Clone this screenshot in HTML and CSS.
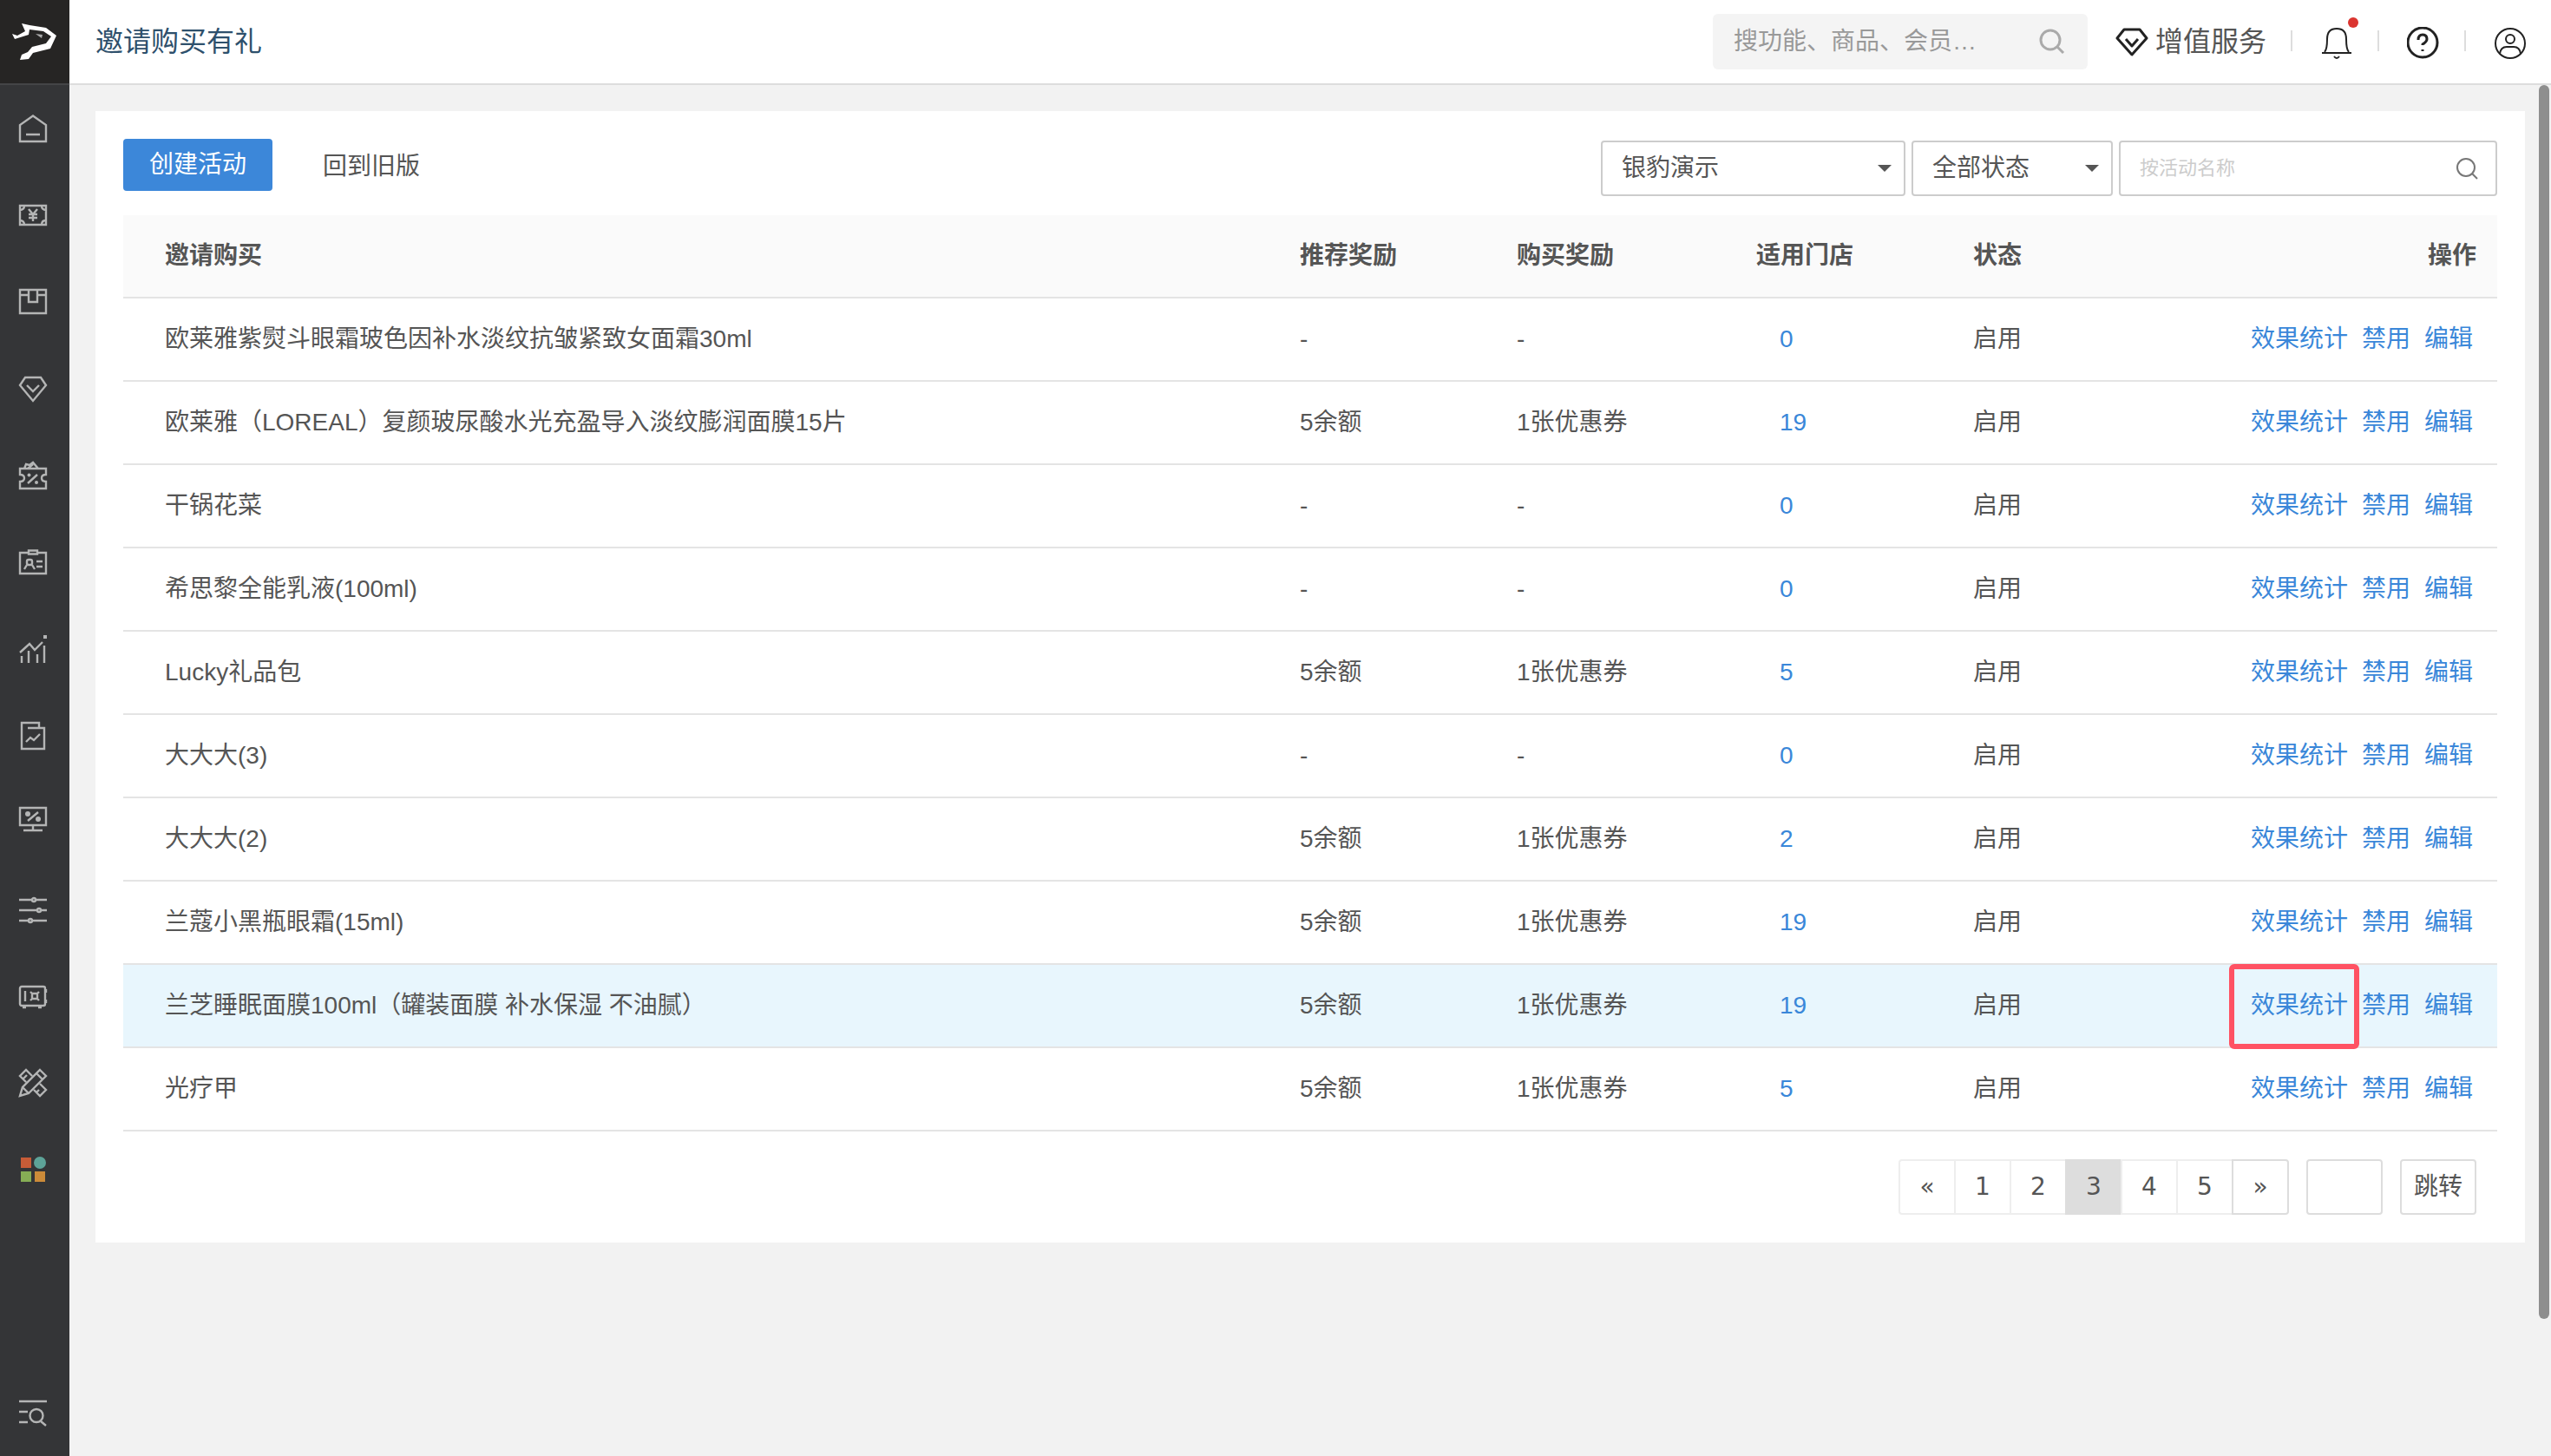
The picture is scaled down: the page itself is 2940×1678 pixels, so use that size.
FILE: index.html
```html
<!DOCTYPE html>
<html lang="zh-CN">
<head>
    <meta charset="UTF-8">
    <meta name="viewport" content="width=device-width, initial-scale=1.0">
    <title>邀请购买有礼</title>
    <link rel="stylesheet" href="styles.css">
</head>
<body>
    <!-- Sidebar -->
    <aside class="sidebar">
        <a class="logo" href="#" aria-label="首页">
            <svg width="52" height="44" viewBox="0 0 52 44"><path fill="#fff" d="M12 1 L21 3 L40 6 L52 15 L45 30 L25 35 L20 42 L10 43 L12 37 L19 34 L24 28 L40 24 L46 16 L37 10 L21 8 L20 14 L4 19 L1 13 L7 15 L16 10 Z"/><path fill="#aaa" d="M28 13 L36 14 L35 18 Z"/></svg>
        </a>
        <nav class="side-nav">
            <a href="#" aria-label="主页"><svg class="icon" viewBox="0 0 32 32"><path d="M1 31V12L16 1.500L31 12V31ZM8 23H24"/></svg></a>
            <a href="#" aria-label="收银"><svg class="icon" viewBox="0 0 32 32"><path d="M1 5H31V27H1ZM1 10Q6 10 6 5M26 5Q26 10 31 10M1 22Q6 22 6 27M26 27Q26 22 31 22M11 9L16 15L21 9M16 15V23M11 15H21M11 19H21"/></svg></a>
            <a href="#" aria-label="商品"><svg class="icon" viewBox="0 0 32 32"><path d="M1 2H31V29H1ZM1 8H11M21 8H31M11 2V16H21V2"/></svg></a>
            <a href="#" aria-label="会员"><svg class="icon" viewBox="0 0 32 32"><path d="M7 3H25L31 12L16 30L1 12ZM9 12L16 19L23 12"/></svg></a>
            <a href="#" aria-label="营销"><svg class="icon" viewBox="0 0 32 32"><path d="M1 8H31V15Q26 15 26 19Q26 23 31 23V31H1V23Q6 23 6 19Q6 15 1 15ZM6 8L8 3L12 4L16 1L22 8M10 8L16 3M10 25L21 15"/><circle class="solid" cx="11.500" cy="15.500" r="2"/><circle class="solid" cx="20" cy="24" r="2"/></svg></a>
            <a href="#" aria-label="员工"><svg class="icon" viewBox="0 0 32 32"><path d="M11 5H1V29H31V5H21M11 2.500H21V6.500H11ZM20 15H27M20 21H27M6 24L9 19M18 24L15 19"/><rect x="9" y="13" width="6" height="6" rx="2"/></svg></a>
            <a href="#" aria-label="数据"><svg class="icon" viewBox="0 0 32 32"><path d="M1 20L12 10L18 17L27 8M3 24V32M11 18V32M21 22V32M29 12V32"/><rect class="solid" x="28" y="0" width="4" height="4"/></svg></a>
            <a href="#" aria-label="报表"><svg class="icon" viewBox="0 0 32 32"><path d="M10 7H29V31H3V1H23V7M8 23L13 18L17 21L24 14"/></svg></a>
            <a href="#" aria-label="网店"><svg class="icon" viewBox="0 0 32 32"><path d="M1 -1H31V19H1ZM16 19V25M5 25H27M10 14L22 4"/><circle class="solid" cx="10" cy="6" r="3"/><circle class="solid" cx="22" cy="12" r="3"/></svg></a>
            <a href="#" aria-label="设置"><svg class="icon" viewBox="0 0 32 32"><path d="M0 5H15M19 5H32M0 17H21M25 17H32M0 29H11M15 29H32"/><circle cx="17" cy="5" r="2"/><circle cx="23" cy="17" r="2"/><circle cx="13" cy="29" r="2"/></svg></a>
            <a href="#" aria-label="资金"><svg class="icon" viewBox="0 0 32 32"><rect x="1" y="5" width="29" height="22" rx="2"/><path d="M7 10V22M15 13H21V19H15ZM13 11L15 13M23 11L21 13M13 21L15 19M23 21L21 19M4 29H8M22 29H26M31 8V12M31 20V24"/></svg></a>
            <a href="#" aria-label="工具"><svg class="icon" viewBox="0 0 32 32"><path d="M24 1L31 8L11 28L1 31L4 21ZM20 5L27 12M4 21L11 28M8 15L1 8L8 1L15 8M5 11L9 7M24 17L31 24L24 31L17 24M20 27L23 24"/></svg></a>
            <a href="#" aria-label="应用"><svg class="icon" viewBox="0 0 32 32"><rect class="app-red" x="2" y="2" width="12" height="12"/><circle class="app-teal" cx="24" cy="8" r="7"/><rect class="app-green" x="2" y="18" width="12" height="12"/><rect class="app-orange" x="18" y="18" width="12" height="12"/></svg></a>
            <a class="nav-bottom" href="#" aria-label="查找菜单"><svg class="icon" viewBox="0 0 32 32"><path d="M0 3H32M0 15H10M0 27H10M25 26L31 31"/><circle cx="20" cy="19.500" r="7.500"/></svg></a>
        </nav>
    </aside>

    <div class="page">
        <!-- Top bar -->
        <header class="topbar">
            <h1>邀请购买有礼</h1>
            <div class="top-tools">
                <div class="top-search">
                    <input type="text" aria-label="搜索" placeholder="搜功能、商品、会员…">
                    <svg width="30" height="30" viewBox="0 0 30 30"><circle cx="13" cy="13" r="11"/><path d="M21 21L28 28"/></svg>
                </div>
                <a class="vas" href="#">
                    <svg width="38" height="34" viewBox="0 0 38 34"><path d="M10 3H28L36 13L19 32L2 13ZM12 14L19 22L26 14"/></svg>
                    <span>增值服务</span>
                </a>
                <button class="top-btn" type="button" aria-label="消息">
                    <svg class="thin" width="38" height="38" viewBox="0 0 38 38"><path d="M5 29Q8 26 8 14Q8 2 19 2Q30 2 30 14Q30 26 33 29M2 30H36M16 34Q19 38 22 34"/></svg>
                    <i class="dot"></i>
                </button>
                <button class="top-btn" type="button" aria-label="帮助">
                    <svg width="38" height="38" viewBox="0 0 38 38"><circle cx="18" cy="18" r="17"/><path d="M13 15Q13 9 18 9Q23 9 23 14Q23 17 18 20V21M18 26V28"/></svg>
                </button>
                <button class="top-btn" type="button" aria-label="账户">
                    <svg class="thin" width="38" height="38" viewBox="0 0 38 38"><circle cx="19" cy="19" r="17"/><circle cx="19" cy="14" r="5"/><path d="M7 31Q8 23 15 23H23Q30 23 31 31"/></svg>
                </button>
            </div>
        </header>

        <main class="content">
            <section class="card">
                <div class="toolbar">
                    <button class="btn-primary" type="button">创建活动</button>
                    <a class="old-link" href="#">回到旧版</a>
                    <div class="filters">
                        <div class="select-box store">
                            <select aria-label="门店"><option>银豹演示</option></select>
                        </div>
                        <div class="select-box status">
                            <select aria-label="状态"><option>全部状态</option></select>
                        </div>
                        <div class="search-box">
                            <input type="text" aria-label="活动名称" placeholder="按活动名称">
                            <svg width="26" height="26" viewBox="0 0 26 26"><circle cx="12" cy="12" r="10"/><path d="M19 19L25 25"/></svg>
                        </div>
                    </div>
                </div>

                <table class="list">
                    <colgroup>
                        <col>
                        <col class="col-refer">
                        <col class="col-buy">
                        <col class="col-store">
                        <col class="col-status">
                        <col class="col-ops">
                    </colgroup>
                    <thead>
                        <tr><th>邀请购买</th><th>推荐奖励</th><th>购买奖励</th><th>适用门店</th><th>状态</th><th>操作</th></tr>
                    </thead>
                    <tbody>
                        <tr>
                            <td>欧莱雅紫熨斗眼霜玻色因补水淡纹抗皱紧致女面霜30ml</td><td>-</td><td>-</td>
                            <td><a href="#">0</a></td><td>启用</td>
                            <td><div class="ops"><a href="#">效果统计</a><a href="#">禁用</a><a href="#">编辑</a></div></td>
                        </tr>
                        <tr>
                            <td>欧莱雅（LOREAL）复颜玻尿酸水光充盈导入淡纹膨润面膜15片</td><td>5余额</td><td>1张优惠券</td>
                            <td><a href="#">19</a></td><td>启用</td>
                            <td><div class="ops"><a href="#">效果统计</a><a href="#">禁用</a><a href="#">编辑</a></div></td>
                        </tr>
                        <tr>
                            <td>干锅花菜</td><td>-</td><td>-</td>
                            <td><a href="#">0</a></td><td>启用</td>
                            <td><div class="ops"><a href="#">效果统计</a><a href="#">禁用</a><a href="#">编辑</a></div></td>
                        </tr>
                        <tr>
                            <td>希思黎全能乳液(100ml)</td><td>-</td><td>-</td>
                            <td><a href="#">0</a></td><td>启用</td>
                            <td><div class="ops"><a href="#">效果统计</a><a href="#">禁用</a><a href="#">编辑</a></div></td>
                        </tr>
                        <tr>
                            <td>Lucky礼品包</td><td>5余额</td><td>1张优惠券</td>
                            <td><a href="#">5</a></td><td>启用</td>
                            <td><div class="ops"><a href="#">效果统计</a><a href="#">禁用</a><a href="#">编辑</a></div></td>
                        </tr>
                        <tr>
                            <td>大大大(3)</td><td>-</td><td>-</td>
                            <td><a href="#">0</a></td><td>启用</td>
                            <td><div class="ops"><a href="#">效果统计</a><a href="#">禁用</a><a href="#">编辑</a></div></td>
                        </tr>
                        <tr>
                            <td>大大大(2)</td><td>5余额</td><td>1张优惠券</td>
                            <td><a href="#">2</a></td><td>启用</td>
                            <td><div class="ops"><a href="#">效果统计</a><a href="#">禁用</a><a href="#">编辑</a></div></td>
                        </tr>
                        <tr>
                            <td>兰蔻小黑瓶眼霜(15ml)</td><td>5余额</td><td>1张优惠券</td>
                            <td><a href="#">19</a></td><td>启用</td>
                            <td><div class="ops"><a href="#">效果统计</a><a href="#">禁用</a><a href="#">编辑</a></div></td>
                        </tr>
                        <tr class="active">
                            <td>兰芝睡眠面膜100ml（罐装面膜 补水保湿 不油腻）</td><td>5余额</td><td>1张优惠券</td>
                            <td><a href="#">19</a></td><td>启用</td>
                            <td><div class="ops"><a class="marked" href="#">效果统计</a><a href="#">禁用</a><a href="#">编辑</a></div></td>
                        </tr>
                        <tr>
                            <td>光疗甲</td><td>5余额</td><td>1张优惠券</td>
                            <td><a href="#">5</a></td><td>启用</td>
                            <td><div class="ops"><a href="#">效果统计</a><a href="#">禁用</a><a href="#">编辑</a></div></td>
                        </tr>
                    </tbody>
                </table>

                <!-- Pagination -->
                <div class="pager">
                    <div class="pages">
                        <a href="#">«</a>
                        <a href="#">1</a>
                        <a href="#">2</a>
                        <a class="current" href="#">3</a>
                        <a href="#">4</a>
                        <a href="#">5</a>
                        <a class="next" href="#">»</a>
                    </div>
                    <input class="page-input" type="text" aria-label="页码">
                    <button class="page-go" type="button">跳转</button>
                </div>
            </section>
            <div class="scroll-thumb"></div>
        </main>
    </div>
</body>
</html>
```
FILE: styles.css
```css
* {
    box-sizing: border-box;
}

body {
    margin: 0;
    display: flex;
    height: 100vh;
    overflow: hidden;
    background-color: #f2f2f2;
    color: #555;
    font-family: "Liberation Sans", "Noto Sans CJK SC", sans-serif;
    font-size: 28px;
    line-height: 40px;
}

a {
    color: #3a87d9;
    text-decoration: none;
}

button, input, select {
    font: inherit;
    color: inherit;
}

svg {
    display: block;
    fill: none;
    flex-shrink: 0;
}

/* Sidebar */
.sidebar {
    width: 80px;
    flex-shrink: 0;
    display: flex;
    flex-direction: column;
    background-color: #343537;
}

.logo {
    height: 98px;
    display: flex;
    align-items: center;
    padding-left: 13px;
    background-color: #262524;
    border-bottom: 2px solid #444547;
}

.side-nav {
    flex: 1;
    display: flex;
    flex-direction: column;
    gap: 68px;
    padding: 34px 22px;
}

.icon {
    width: 32px;
    height: 32px;
    overflow: visible;
    stroke: #b4b5b5;
    stroke-width: 2.4;
}

.icon .solid {
    fill: #b4b5b5;
    stroke: none;
}

.app-red, .app-teal, .app-green, .app-orange {
    stroke: none;
}

.app-red {
    fill: #c75c37;
}

.app-teal {
    fill: #5da398;
}

.app-green {
    fill: #86ad55;
}

.app-orange {
    fill: #cc8b39;
}

.nav-bottom {
    margin-top: auto;
}

/* Top bar */
.page {
    flex: 1;
    min-width: 0;
    display: flex;
    flex-direction: column;
}

.topbar {
    height: 98px;
    display: flex;
    align-items: center;
    justify-content: space-between;
    padding: 0 26px 0 30px;
    background-color: #fff;
    border-bottom: 2px solid #ddd;
}

.topbar h1 {
    margin: 0;
    font-size: 32px;
    font-weight: normal;
    color: #2e506c;
}

.top-tools {
    display: flex;
    align-items: center;
}

.top-search {
    width: 432px;
    height: 64px;
    display: flex;
    align-items: center;
    padding: 0 26px 0 24px;
    background-color: #f4f4f4;
    border-radius: 6px;
}

.top-search input {
    flex: 1;
    min-width: 0;
    padding: 0;
    border: none;
    background: none;
}

.top-search input::placeholder {
    color: #999;
}

.top-search svg {
    stroke: #aaa;
    stroke-width: 3;
}

.vas {
    display: flex;
    align-items: center;
    gap: 8px;
    margin: 0 28px 0 32px;
    font-size: 32px;
    color: #555;
}

.vas svg, .top-btn svg {
    stroke: #222;
    stroke-width: 3;
    stroke-linejoin: round;
}

.top-btn .thin {
    stroke-width: 2;
}

.top-btn {
    position: relative;
    width: 100px;
    height: 40px;
    display: flex;
    align-items: center;
    padding: 4px 0 0 34px;
    border: none;
    background: none;
}

/* Short divider in front of each button */
.top-btn::before {
    content: "";
    position: absolute;
    left: 0;
    top: 7px;
    width: 2px;
    height: 24px;
    background-color: #ddd;
}

.top-btn:last-child {
    width: 74px;
}

.dot {
    position: absolute;
    top: -8px;
    left: 66px;
    width: 12px;
    height: 12px;
    border-radius: 50%;
    background-color: #db3530;
}

/* Content */
.content {
    position: relative;
    flex: 1;
    padding: 30px;
}

.scroll-thumb {
    position: absolute;
    top: 0;
    right: 2px;
    width: 12px;
    height: 90%;
    border-radius: 6px;
    background-color: #8e8e8e;
}

.card {
    padding: 32px;
    background-color: #fff;
}

.toolbar {
    display: flex;
    align-items: flex-start;
    margin-bottom: 22px;
}

.btn-primary {
    width: 172px;
    height: 60px;
    padding: 0;
    border: none;
    border-radius: 4px;
    background-color: #3c87d9;
    color: #fff;
}

.old-link {
    margin-left: 58px;
    line-height: 64px;
    color: #555;
}

.filters {
    display: flex;
    gap: 7px;
    margin-left: auto;
    padding-top: 2px;
}

.select-box, .search-box {
    position: relative;
    height: 64px;
    border: 2px solid #ccc;
    border-radius: 4px;
}

.store {
    width: 351px;
}

.status {
    width: 232px;
}

.select-box select {
    width: 100%;
    height: 100%;
    padding: 0 22px;
    border: none;
    background: none;
    appearance: none;
}

.select-box::after {
    content: "";
    position: absolute;
    top: 26px;
    right: 14px;
    border: 8px solid transparent;
    border-top-color: #555;
    border-bottom: none;
}

.search-box {
    width: 436px;
    display: flex;
    align-items: center;
    padding: 0 20px 0 22px;
}

.search-box input {
    flex: 1;
    min-width: 0;
    padding: 0;
    border: none;
    font-size: 22px;
}

.search-box input::placeholder {
    color: #ccc;
}

.search-box svg {
    stroke: #777;
    stroke-width: 2;
}

/* Table */
.list {
    width: 100%;
    table-layout: fixed;
    border-collapse: separate;
    border-spacing: 0;
}

.col-refer, .col-store {
    width: 250px;
}

.col-buy {
    width: 276px;
}

.col-status {
    width: 200px;
}

.col-ops {
    width: 404px;
}

.list th, .list td {
    height: 96px;
    padding: 0;
    border-bottom: 2px solid #e4e4e4;
    text-align: left;
}

.list th {
    background-color: #fafafa;
}

.list th:first-child, .list td:first-child {
    padding-left: 48px;
}

.list th:last-child {
    padding-right: 24px;
    text-align: right;
}

.list td:nth-child(4) {
    padding-left: 27px;
}

.list .active td {
    background-color: #e8f6fd;
}

.ops {
    display: flex;
    justify-content: flex-end;
    gap: 16px;
    padding-right: 28px;
}

.marked {
    position: relative;
}

/* Frame round the highlighted link */
.marked::after {
    content: "";
    position: absolute;
    inset: -28px -13px -30px -25px;
    border: 6px solid #ff5263;
    border-radius: 6px;
}

/* Pagination */
.pager {
    display: flex;
    justify-content: flex-end;
    gap: 20px;
    padding: 32px 24px 0 0;
    font-family: "DejaVu Sans", "Noto Sans CJK SC", sans-serif;
}

.pages {
    display: flex;
}

.pages a {
    width: 64px;
    height: 64px;
    border: 2px solid #eee;
    border-right: none;
    line-height: 60px;
    text-align: center;
    color: #555;
}

.pages a:first-child {
    border-radius: 4px 0 0 4px;
}

.pages .current {
    border-color: #ddd;
    background-color: #ddd;
}

.pages .next {
    width: 66px;
    border: 2px solid #ddd;
    border-radius: 0 4px 4px 0;
}

.page-input, .page-go {
    width: 88px;
    height: 64px;
    padding: 0;
    border: 2px solid #ddd;
    border-radius: 4px;
    background-color: #fff;
}
```
